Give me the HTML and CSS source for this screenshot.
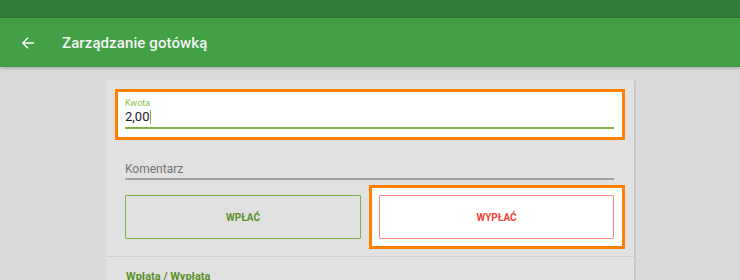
FILE: index.html
```html
<!DOCTYPE html>
<html lang="pl">
<head>
    <meta charset="UTF-8">
    <title>Zarządzanie gotówką</title>
    <link rel="stylesheet" href="styles.css">
</head>
<body>
    <div class="status-bar"></div>
    <div class="app-bar">
        <svg class="back" width="14" height="14" viewBox="0 0 16 16">
            <path d="M15 8H2M8 2L2 8l6 6" fill="none" stroke="#fff" stroke-width="1.6"/>
        </svg>
        <h1>Zarządzanie gotówką</h1>
    </div>

    <div class="card">
        <div class="highlight amount-box">
            <div class="field">
                <div class="field-label">Kwota</div>
                <div class="field-value">2,00<span class="caret"></span></div>
            </div>
        </div>

        <div class="comment">
            <div class="comment-text">Komentarz</div>
        </div>

        <div class="actions">
            <div class="action-cell">
                <button class="btn btn-in">WPŁAĆ</button>
            </div>
            <div class="action-cell highlight">
                <button class="btn btn-out">WYPŁAĆ</button>
            </div>
        </div>

        <div class="section">
            <div class="section-title">Wpłata / Wypłata</div>
        </div>
    </div>
</body>
</html>
```
FILE: styles.css
```css
* { margin: 0; padding: 0; box-sizing: border-box; }
body {
    font-family: Roboto, "Noto Sans", sans-serif;
    background: #d9d9d9;
    width: 740px; height: 280px; overflow: hidden;
}
.status-bar { height: 18px; background: #317b37; }
.app-bar {
    height: 49px; background: #43a047; display: flex; align-items: center;
    padding-left: 21px; box-shadow: 0 1px 3px rgba(0,0,0,0.25);
    position: relative;
}
.app-bar .back { margin-right: 27px; }
.app-bar h1 { color: #f4f4f4; font-size: 15px; font-weight: 500; letter-spacing: 0.1px; }

.card {
    width: 528px; margin: 13px 0 0 106px; background: #e1e1e1;
    padding-top: 9px; height: 220px;
    box-shadow: 1px 0 2px rgba(0,0,0,0.15), 0 -1px 0 #e9e9e9;
}
.highlight { border: 3px solid #ff8000; background: #fff; }
.amount-box { margin: 0 9px; height: 51px; padding: 6px 8px 0 7px; }
.field { border-bottom: 2px solid #7cb342; height: 31px; }
.field-label { color: #8bc34a; font-size: 9px; line-height: 11px; }
.field-value {
    color: #222; font-size: 13px; line-height: 15px;
    display: flex; align-items: center;
}
.caret { width: 1px; height: 14px; background: #7cb342; margin-left: 1px; }

.comment { padding: 22px 20px 0 19px; height: 45px; }
.comment-text {
    color: #757575; font-size: 12px; line-height: 15px;
    border-bottom: 2px solid #a4a4a4; padding-bottom: 1px;
}

.actions { display: grid; grid-template-columns: 254px 256px; margin: 0 9px; height: 64px; }
.action-cell { padding: 7px 5px 7px 7px; border: 3px solid transparent; }
.action-cell.highlight { padding: 7px 8px 7px 7px; border-color: #ff8000; }
.btn {
    width: 100%; height: 44px; font-family: Roboto, sans-serif;
    font-size: 10px; font-weight: 700; background: transparent; cursor: pointer;
    border-radius: 1px;
}
.btn-in { border: 1px solid #7cb342; color: #5b922a; }
.btn-out { border: 1px solid #ff8a80; color: #f44336; background: #fff; }

.section { margin-top: 7px; border-top: 1px solid #d0d0d0; padding: 13px 20px; }
.section-title { color: #5b922a; font-size: 11px; font-weight: 700; }
```
